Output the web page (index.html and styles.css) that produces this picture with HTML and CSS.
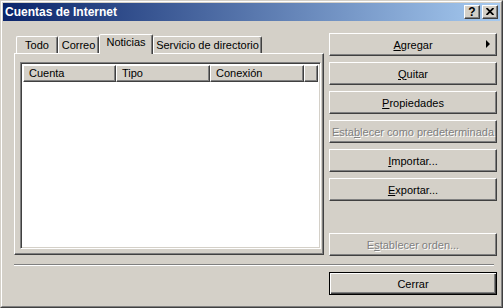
FILE: index.html
```html
<!DOCTYPE html>
<html>
<head>
  <title>Cuentas de Internet</title>
  <link rel="stylesheet" href="styles.css">
</head>
<body>

  <div class="window">
    <div class="frame">
      <div class="titlebar">
        <span class="title">Cuentas de Internet</span>
        <div class="caption-buttons">
          <div class="cap-btn">?</div>
          <div class="cap-btn close">
            <svg width="8" height="7" viewBox="0 0 8 7">
              <path d="M0.5 0 L7.5 7 M7.5 0 L0.5 7" stroke="#000" stroke-width="1.8" fill="none"/>
            </svg>
          </div>
        </div>
      </div>

      <div class="content">
        <div class="main">
          <div class="left">
            <div class="tabs">
              <div class="tab tab-todo">Todo</div>
              <div class="tab tab-correo">Correo</div>
              <div class="tab tab-noticias active">Noticias</div>
              <div class="tab tab-servicio">Servicio de directorio</div>
            </div>
            <div class="panel">
              <div class="listview">
                <div class="list-header">
                  <div class="col col-cuenta">Cuenta</div>
                  <div class="col col-tipo">Tipo</div>
                  <div class="col col-conexion">Conexión</div>
                  <div class="col col-fill"></div>
                </div>
                <div class="list-body"></div>
              </div>
            </div>
          </div>

          <div class="right">
            <button class="btn has-arrow"><u>A</u>gregar<span class="arrow"></span></button>
            <button class="btn"><u>Q</u>uitar</button>
            <button class="btn"><u>P</u>ropiedades</button>
            <button class="btn disabled">Esta<u>b</u>lecer como predeterminada</button>
            <button class="btn"><u>I</u>mportar...</button>
            <button class="btn"><u>E</u>xportar...</button>
            <button class="btn disabled bottom">E<u>s</u>tablecer orden...</button>
          </div>
        </div>

        <div class="separator"></div>

        <div class="footer">
          <button class="btn default">Cerrar</button>
        </div>
      </div>
    </div>
  </div>

</body>
</html>
```

FILE: styles.css
```css
body {
  margin: 0;
  font-family: "Liberation Sans", Arial, sans-serif;
  font-size: 11px;
  background: #d4d0c8;
}
.window {
  width: 503px;
  height: 308px;
  box-sizing: border-box;
  border: 1px solid;
  border-color: #d4d0c8 #404040 #404040 #d4d0c8;
  background: #d4d0c8;
}
.frame {
  height: 100%;
  box-sizing: border-box;
  border: 1px solid;
  border-color: #ffffff #808080 #808080 #ffffff;
  padding: 1px;
  display: flex;
  flex-direction: column;
}

/* barra de titulo */
.titlebar {
  height: 18px;
  display: flex;
  align-items: center;
  justify-content: space-between;
  padding: 0 2px 0 2px;
  background: linear-gradient(to right, #0a246a, #a6caf0);
}
.title {
  color: #fff;
  font-weight: bold;
  font-size: 12px;
}
.caption-buttons {
  display: flex;
  gap: 2px;
}
.cap-btn {
  width: 16px;
  height: 14px;
  box-sizing: border-box;
  background: #d4d0c8;
  border: 1px solid;
  border-color: #fff #404040 #404040 #fff;
  box-shadow: inset -1px -1px #808080;
  font-size: 12px;
  font-weight: bold;
  line-height: 12px;
  text-align: center;
  color: #000;
}
.cap-btn.close {
  display: flex;
  align-items: center;
  justify-content: center;
  padding: 0 1px 1px 0;
}

/* contenido */
.content {
  flex: 1;
  padding: 12px 3px 0 11px;
}
.main {
  display: flex;
  gap: 5px;
  height: 223px;
}
.left {
  width: 310px;
  padding-top: 1px;
  display: flex;
  flex-direction: column;
}
.tabs {
  display: flex;
  align-items: flex-end;
  height: 19px;
  padding-left: 2px;
}
.tab {
  height: 17px;
  box-sizing: border-box;
  border: 1px solid;
  border-bottom: none;
  border-color: #fff #404040 transparent #fff;
  box-shadow: inset -1px 0 #808080;
  border-radius: 2px 2px 0 0;
  text-align: center;
  line-height: 16px;
  color: #000;
}
.tab-todo { width: 42px; }
.tab-correo { width: 41px; }
.tab-noticias { width: 54px; }
.tab-servicio { width: 109px; }
.tab.active {
  height: 20px;
  margin-bottom: -1px;
  position: relative;
  z-index: 1;
  background: #d4d0c8;
  line-height: 15px;
}
.panel {
  height: 202px;
  box-sizing: border-box;
  border: 1px solid;
  border-color: #fff #404040 #404040 #fff;
  box-shadow: inset -1px -1px #808080;
  padding: 8px 2px 5px 5px;
  display: flex;
}
.listview {
  flex: 1;
  box-sizing: border-box;
  border: 1px solid;
  border-color: #808080 #fff #fff #808080;
  box-shadow: inset 1px 1px #404040, inset -1px -1px #d4d0c8;
  background: #fff;
  padding: 2px 2px 2px 2px;
  display: flex;
  flex-direction: column;
}
.list-header {
  display: flex;
  height: 17px;
}
.col {
  box-sizing: border-box;
  background: #d4d0c8;
  border: 1px solid;
  border-color: #fff #404040 #404040 #fff;
  box-shadow: inset -1px -1px #808080;
  padding-left: 5px;
  line-height: 14px;
  color: #000;
}
.col-cuenta { width: 93px; }
.col-tipo { width: 94px; }
.col-conexion { width: 94px; }
.col-fill { flex: 1; }
.list-body {
  flex: 1;
}

/* botones */
.right {
  width: 168px;
  display: flex;
  flex-direction: column;
  gap: 6px;
}
.btn {
  height: 23px;
  box-sizing: border-box;
  background: #d4d0c8;
  border: 1px solid;
  border-color: #fff #404040 #404040 #fff;
  box-shadow: inset -1px -1px #808080;
  font-family: inherit;
  font-size: 11px;
  color: #000;
  padding: 0;
  position: relative;
  text-align: center;
}
.btn.disabled {
  color: #808080;
  text-shadow: 1px 1px 0 #fff;
}
.btn.bottom {
  margin-top: auto;
}
.arrow {
  position: absolute;
  right: 6px;
  top: 6px;
  width: 0;
  height: 0;
  border-left: 4px solid #000;
  border-top: 4px solid transparent;
  border-bottom: 4px solid transparent;
}
.separator {
  margin: 8px 3px 0 0;
  border-top: 1px solid #808080;
  border-bottom: 1px solid #fff;
  height: 0;
}
.footer {
  display: flex;
  justify-content: flex-end;
  margin-top: 6px;
}
.btn.default {
  width: 168px;
  border-color: #000;
  box-shadow: inset 1px 1px #fff, inset -1px -1px #404040, inset -2px -2px #808080;
}
```
